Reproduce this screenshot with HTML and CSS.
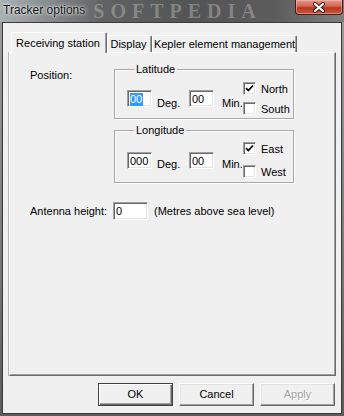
FILE: index.html
```html
<!DOCTYPE html>
<html lang="en">
  <head>
    <meta charset="UTF-8" />
    <title>Tracker options</title>
    <link rel="stylesheet" href="styles.css">
  </head>

  <body>
    <div class="window">
      <!-- 标题栏 -->
      <div class="titlebar">
        <span class="title">Tracker options</span>
        <span class="wm-title">SOFTPEDIA</span>
        <div class="close">
          <svg width="14" height="11" viewBox="0 0 14 11">
            <path d="M3 2l8 7M11 2l-8 7" stroke="#3a1410" stroke-width="4" stroke-linecap="round" />
            <path d="M3 2l8 7M11 2l-8 7" stroke="#fff" stroke-width="2.2" stroke-linecap="round" />
          </svg>
        </div>
      </div>

      <div class="client">
        <div class="tabs">
          <div class="tab active tab-rs">Receiving station</div>
          <div class="tab tab-display">Display</div>
          <div class="tab tab-kepler">Kepler element management</div>
        </div>

        <div class="panel">
          <div class="pos-row">
            <div class="pos-label">Position:</div>
            <div class="groups">
              <fieldset class="group lat">
                <legend>Latitude</legend>
                <div class="field"><span class="sel">00</span></div>
                <span class="unit deg">Deg.</span>
                <div class="field">00</div>
                <span class="unit min">Min.</span>
                <div class="checks">
                  <label class="check"><span class="box"><svg width="9" height="9" viewBox="0 0 9 9"><path d="M1 4.2l2.3 2.4L8 1.5" stroke="#000" stroke-width="1.7" fill="none" /></svg></span>North</label>
                  <label class="check"><span class="box"></span>South</label>
                </div>
              </fieldset>

              <fieldset class="group lon">
                <legend>Longitude</legend>
                <div class="field">000</div>
                <span class="unit deg">Deg.</span>
                <div class="field">00</div>
                <span class="unit min">Min.</span>
                <div class="checks">
                  <label class="check"><span class="box"><svg width="9" height="9" viewBox="0 0 9 9"><path d="M1 4.2l2.3 2.4L8 1.5" stroke="#000" stroke-width="1.7" fill="none" /></svg></span>East</label>
                  <label class="check"><span class="box"></span>West</label>
                </div>
              </fieldset>
            </div>
          </div>

          <!-- 天线高度 -->
          <div class="antenna-row">
            <span class="ant-label">Antenna height:</span>
            <div class="field ant-field">0</div>
            <span class="ant-note">(Metres above sea level)</span>
          </div>
        </div>

        <div class="buttons">
          <div class="btn default">OK</div>
          <div class="btn">Cancel</div>
          <div class="btn disabled">Apply</div>
        </div>
      </div>
    </div>
  </body>
</html>
```

FILE: styles.css
```css
* {
  margin: 0;
  padding: 0;
  box-sizing: border-box;
}

body {
  font: 11px "Liberation Sans", Arial, sans-serif;
  color: #000;
  background: #6e6e6e;
}

.window {
  width: 344px;
  height: 416px;
  display: flex;
  flex-direction: column;
  overflow: hidden;
  background: linear-gradient(to bottom, #9a9ea0, #7a7a7a 60%, #5c5c5c);
}

/* 标题栏 */
.titlebar {
  flex: none;
  height: 22px;
  display: flex;
  align-items: flex-start;
  background: linear-gradient(to right, #a9b1b4 0, #8c9194 12%, #606263 30%, #545454 55%, #5c5c5c 80%, #7d7f80 100%);
}
.title {
  font-size: 12px;
  line-height: 15px;
  margin: 3px 0 0 3px;
  color: #111;
  text-shadow: 0 0 4px rgba(255, 255, 255, 0.9), 0 0 2px rgba(255, 255, 255, 0.9);
}
.wm-title {
  margin: 1px 0 0 8px;
  font: bold 20px/20px "Liberation Serif", serif;
  letter-spacing: 6px;
  color: rgba(190, 190, 190, 0.45);
}
.close {
  margin-left: auto;
  margin-right: 1px;
  width: 48px;
  height: 15px;
  border: 1px solid #4a1a12;
  border-top: none;
  border-radius: 0 0 4px 4px;
  background: linear-gradient(to bottom, #e09a8e 0, #d0644f 45%, #b8371f 55%, #c6553b 100%);
  box-shadow: inset 0 0 0 1px rgba(255, 200, 190, 0.5);
  display: flex;
  justify-content: center;
  align-items: center;
}

/* 窗口内容区 */
.client {
  flex: 1;
  margin: 0 2px 2px;
  border: 1px solid #3a3a3a;
  background: #f0f0f0;
  padding: 9px 5px 0 6px;
  display: flex;
  flex-direction: column;
}

/* 选项卡 */
.tabs {
  height: 20px;
  display: flex;
  align-items: flex-end;
  padding-left: 2px;
  position: relative;
  z-index: 1;
}
.tab {
  height: 17px;
  line-height: 16px;
  text-align: center;
  white-space: nowrap;
  background: #f0f0f0;
  border-top: 1px solid #fff;
  border-left: 1px solid #fff;
  border-right: 1px solid #696969;
  border-radius: 2px 2px 0 0;
  box-shadow: inset -1px 0 0 #a0a0a0;
}
.tab.active {
  height: 21px;
  line-height: 20px;
  margin-bottom: -1px;
}
.tab-rs {
  width: 96px;
  padding-right: 2px;
}
.tab-display {
  width: 45px;
  padding-right: 2px;
}
.tab-kepler {
  width: 145px;
}

.panel {
  height: 324px;
  border: 1px solid;
  border-color: #fff #696969 #696969 #fff;
  box-shadow: inset -1px -1px 0 #a0a0a0, -1px 0 0 #b4b4b4;
  padding: 10px 0 0 20px;
}

.pos-row {
  display: flex;
}
.pos-label {
  width: 84px;
  margin-top: 6px;
}
.groups {
  display: flex;
  flex-direction: column;
  gap: 5px;
}

/* 分组框 */
.group {
  width: 180px;
  min-width: 0;
  border: 1px solid #a8a8a8;
  box-shadow: 1px 1px 0 #fff, inset 1px 1px 0 #fff;
  display: flex;
  align-items: center;
}
.group legend {
  margin-left: 7px;
  padding: 0 2px;
  line-height: 13px;
  background: #f0f0f0;
}
.lat {
  padding: 6px 0 3px 12px;
}
.lon {
  padding: 5px 0 4px 12px;
}
.lon .checks {
  gap: 10px;
}

.field {
  width: 25px;
  height: 17px;
  line-height: 14px;
  background: #fff;
  border: 1px solid;
  border-color: #a0a0a0 #fff #fff #a0a0a0;
  box-shadow: inset 1px 1px 0 #696969, inset -1px -1px 0 #e3e3e3;
  padding-top: 1px;
  padding-left: 2px;
}
.sel {
  display: inline-block;
  background: #3399ff;
  color: #fff;
  padding: 0 1px 0 0;
  line-height: 13px;
}
.unit {
  margin-top: 8px;
}
.deg {
  width: 32px;
  margin-left: 5px;
}
.min {
  width: 21px;
  margin-left: 8px;
}

.checks {
  display: flex;
  flex-direction: column;
  gap: 7px;
}
.check {
  display: flex;
  align-items: center;
  gap: 5px;
  height: 13px;
}
.box {
  width: 13px;
  height: 13px;
  background: #fff;
  border: 1px solid;
  border-color: #a0a0a0 #fff #fff #a0a0a0;
  box-shadow: inset 1px 1px 0 #696969, inset -1px -1px 0 #e3e3e3;
  display: flex;
  justify-content: center;
  align-items: center;
}

/* 天线高度 */
.antenna-row {
  display: flex;
  align-items: center;
  margin-top: 19px;
}
.ant-label {
  width: 83px;
}
.ant-field {
  width: 35px;
  height: 18px;
}
.ant-note {
  margin-left: 6px;
}

/* 按钮 */
.buttons {
  display: flex;
  justify-content: flex-end;
  gap: 6px;
  margin-top: 7px;
  padding-right: 1px;
}
.btn {
  width: 75px;
  height: 23px;
  line-height: 20px;
  text-align: center;
  background: #f0f0f0;
  border: 1px solid;
  border-color: #fff #696969 #696969 #fff;
  box-shadow: inset -1px -1px 0 #a0a0a0, inset 1px 1px 0 #e3e3e3;
}
.btn.default {
  border-color: #404040;
  box-shadow: inset 1px 1px 0 #fff, inset -1px -1px 0 #696969, inset -2px -2px 0 #a0a0a0;
}
.btn.disabled {
  color: #a0a0a0;
  text-shadow: 1px 1px 0 #fff;
}
```
